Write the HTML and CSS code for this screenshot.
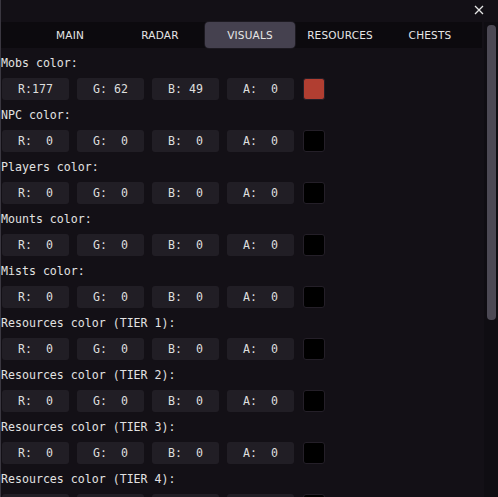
FILE: index.html
```html
<!DOCTYPE html>
<html>
<head>
<meta charset="utf-8">
<link rel="stylesheet" href="styles.css">
</head>
<body>
<div class="window">
  <div class="titlebar">
    <svg class="close" width="10" height="10" viewBox="0 0 10 10"><path d="M1 1 L9 9 M9 1 L1 9" stroke="#e6e6e6" stroke-width="1.3" fill="none"/></svg>
  </div>
  <div class="main">
    <div class="content">
      <nav class="tabs">
        <div class="tab">MAIN</div>
        <div class="tab">RADAR</div>
        <div class="tab active">VISUALS</div>
        <div class="tab">RESOURCES</div>
        <div class="tab">CHESTS</div>
      </nav>
      <div class="rows">
        <div class="label">Mobs color:</div>
        <div class="fields"><div class="field">R:177</div><div class="field">G: 62</div><div class="field">B: 49</div><div class="field">A:  0</div><div class="swatch red"></div></div>
        <div class="label">NPC color:</div>
        <div class="fields"><div class="field">R:  0</div><div class="field">G:  0</div><div class="field">B:  0</div><div class="field">A:  0</div><div class="swatch"></div></div>
        <div class="label">Players color:</div>
        <div class="fields"><div class="field">R:  0</div><div class="field">G:  0</div><div class="field">B:  0</div><div class="field">A:  0</div><div class="swatch"></div></div>
        <div class="label">Mounts color:</div>
        <div class="fields"><div class="field">R:  0</div><div class="field">G:  0</div><div class="field">B:  0</div><div class="field">A:  0</div><div class="swatch"></div></div>
        <div class="label">Mists color:</div>
        <div class="fields"><div class="field">R:  0</div><div class="field">G:  0</div><div class="field">B:  0</div><div class="field">A:  0</div><div class="swatch"></div></div>
        <div class="label">Resources color (TIER 1):</div>
        <div class="fields"><div class="field">R:  0</div><div class="field">G:  0</div><div class="field">B:  0</div><div class="field">A:  0</div><div class="swatch"></div></div>
        <div class="label">Resources color (TIER 2):</div>
        <div class="fields"><div class="field">R:  0</div><div class="field">G:  0</div><div class="field">B:  0</div><div class="field">A:  0</div><div class="swatch"></div></div>
        <div class="label">Resources color (TIER 3):</div>
        <div class="fields"><div class="field">R:  0</div><div class="field">G:  0</div><div class="field">B:  0</div><div class="field">A:  0</div><div class="swatch"></div></div>
        <div class="label">Resources color (TIER 4):</div>
        <div class="fields"><div class="field">R:  0</div><div class="field">G:  0</div><div class="field">B:  0</div><div class="field">A:  0</div><div class="swatch"></div></div>
      </div>
    </div>
    <div class="scrollbar"><div class="thumb"></div></div>
  </div>
</div>
</body>
</html>
```

FILE: styles.css
```css
html, body {
  margin: 0;
  padding: 0;
  background: #131016;
}
.window {
  width: 498px;
  height: 497px;
  overflow: hidden;
  background: #131016;
  border-left: 1px solid #3a3740;
  box-sizing: border-box;
  display: flex;
  flex-direction: column;
  font-family: "DejaVu Sans Mono", monospace;
  color: #e2e2e2;
}
.titlebar {
  height: 22px;
  flex: none;
  display: flex;
  justify-content: flex-end;
  align-items: flex-start;
  padding: 5px 14px 0 0;
  box-sizing: border-box;
}
.close {
  display: block;
}
.main {
  flex: 1;
  display: flex;
  min-height: 0;
}
.content {
  flex: 1;
  min-width: 0;
}
.tabs {
  height: 26px;
  background: #0c0a0e;
  display: flex;
  padding-left: 24px;
  margin-right: 2px;
}
.tab {
  width: 90px;
  display: flex;
  align-items: center;
  justify-content: center;
  font-family: "DejaVu Sans", sans-serif;
  font-size: 10.5px;
  letter-spacing: 0.2px;
  color: #e6e6e6;
}
.tab.active {
  background: #45414f;
  border-radius: 4px;
  box-shadow: 0 0 0 1px #1d1a21;
}
.rows {
  padding: 8px 0 0 0;
}
.label {
  height: 14px;
  line-height: 14px;
  font-size: 11.6px;
  white-space: pre;
}
.fields {
  display: flex;
  align-items: center;
  height: 22px;
  margin: 8px 0;
  padding-left: 1px;
}
.field {
  width: 67px;
  height: 22px;
  margin-right: 8px;
  background: #211e25;
  border-radius: 3px;
  font-size: 11.6px;
  line-height: 22px;
  text-align: center;
  white-space: pre;
  color: #dedede;
}
.swatch {
  width: 20px;
  height: 20px;
  margin-left: 1px;
  background: #000;
  border: 1px solid #241f28;
  border-radius: 3px;
}
.swatch.red {
  background: #b13e31;
}
.scrollbar {
  width: 14px;
  flex: none;
  background: #0f0d12;
  padding: 3px 3px 0 3px;
  box-sizing: border-box;
}
.thumb {
  width: 9px;
  height: 295px;
  background: #4c4954;
  border-radius: 4px;
}
```
